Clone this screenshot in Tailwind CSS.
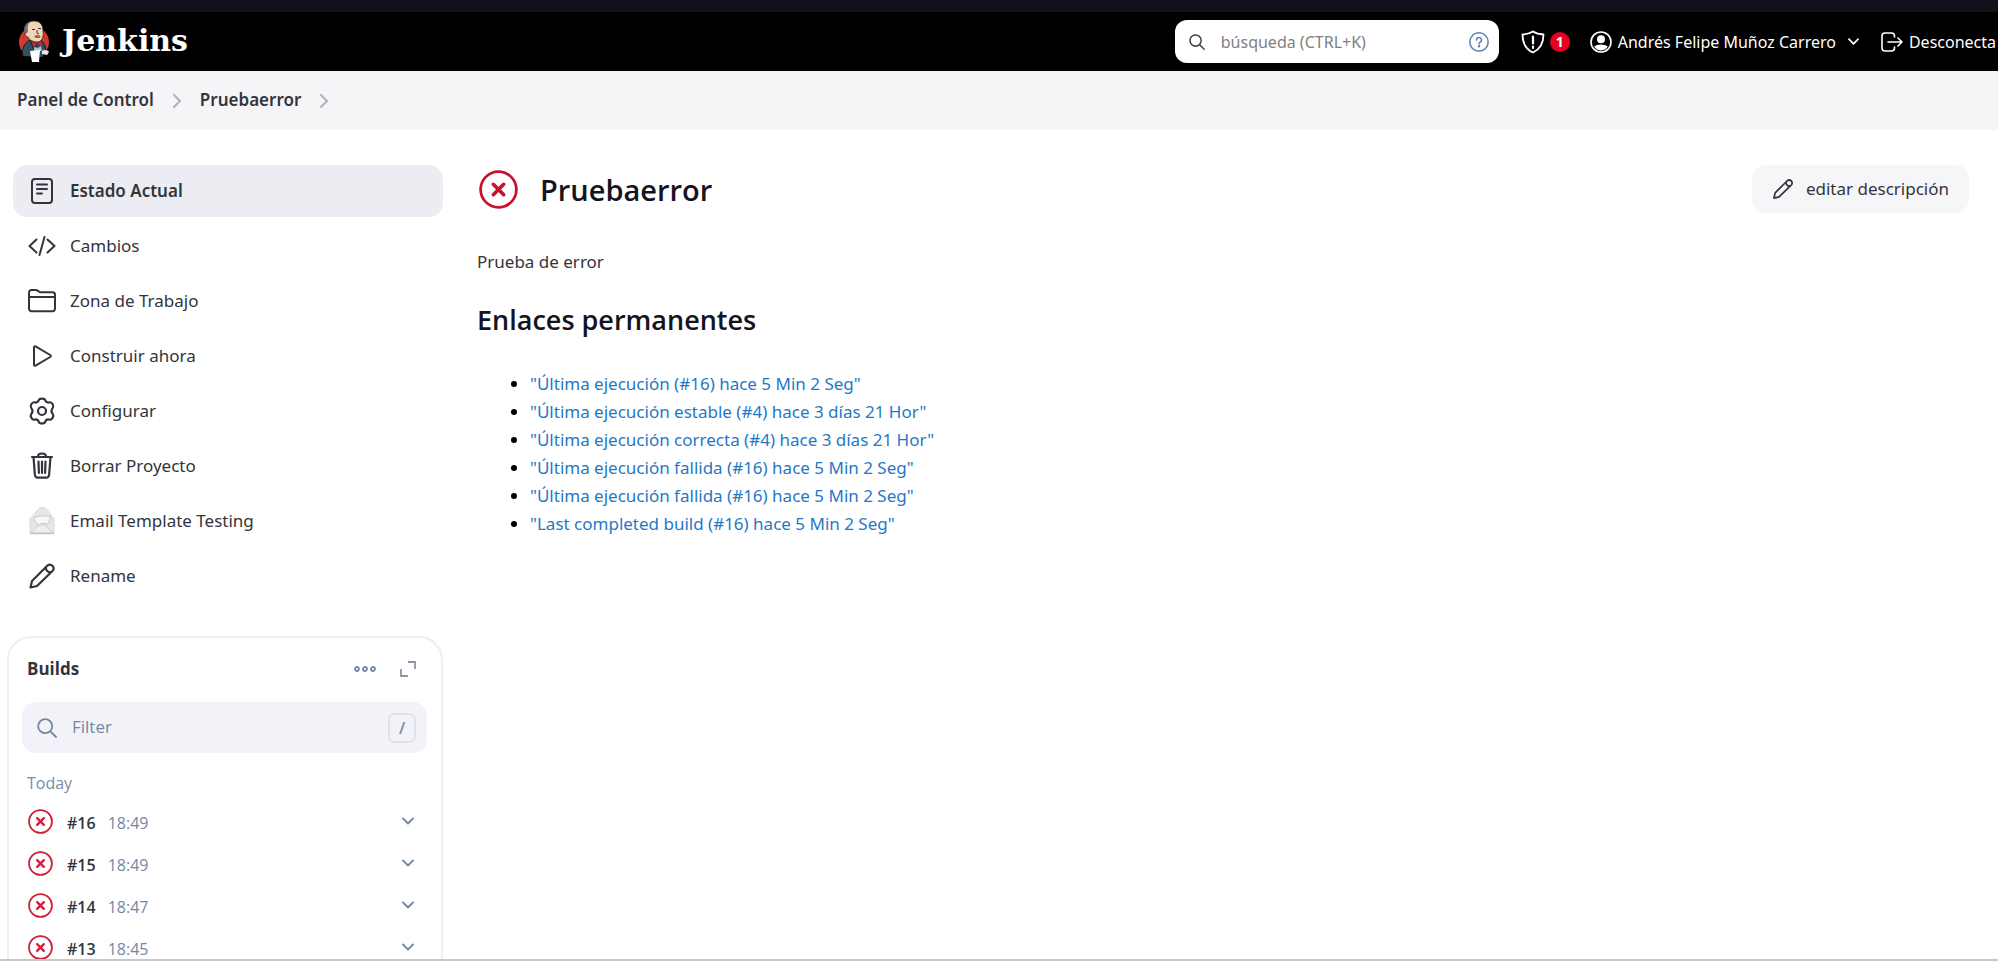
<!DOCTYPE html>
<html lang="es">
<head>
<meta charset="utf-8">
<meta name="viewport" content="width=device-width, initial-scale=1">
<title>Pruebaerror [Jenkins]</title>
<script src="https://cdn.jsdelivr.net/npm/@tailwindcss/browser@4"></script>
</head>
<body class="flex h-screen flex-col overflow-hidden border-b-2 border-[#c9c9cb] bg-white font-['Open_Sans','Noto_Sans',sans-serif] text-lg text-[#33343c]">
<svg class="hidden">
  <symbol id="fail" viewBox="0 0 24 24" fill="none" stroke="currentColor" stroke-linecap="round"><circle cx="12" cy="12" r="11" stroke-width="1.7"/><path d="M8.800 8.800l6.400 6.400M15.200 8.800l-6.400 6.400" stroke-width="2.200"/></symbol>
  <symbol id="down" viewBox="0 0 12 12" fill="none" stroke="currentColor" stroke-width="1.8" stroke-linecap="round" stroke-linejoin="round"><path d="M1 3.5l5 5 5-5"/></symbol>
  <symbol id="right" viewBox="0 0 10 14" fill="none" stroke="currentColor" stroke-width="2" stroke-linecap="round" stroke-linejoin="round"><path d="M2 1l6 6-6 6"/></symbol>
  <symbol id="search" viewBox="0 0 20 20" fill="none" stroke="currentColor" stroke-width="1.8" stroke-linecap="round"><circle cx="8.2" cy="8.2" r="7"/><path d="M13.4 13.4L19 19"/></symbol>
  <symbol id="pencil" viewBox="0 0 28 28" fill="none" stroke="currentColor" stroke-width="2.200" stroke-linejoin="round"><path d="M2.500 25.500l1.500-6.500L19.500 3.500a3.700 3.700 0 0 1 5.200 5.200L9 24z"/><path d="M17.800 5.200c0 3 2 5.200 5.200 5.200"/></symbol>
</svg>

<div class="h-3 shrink-0 bg-[#12101a]"></div>
<header class="flex h-[59px] shrink-0 items-center overflow-hidden bg-black pr-0.5 pl-[18px] font-['Noto_Sans','Open_Sans',sans-serif] whitespace-nowrap text-white">
  <a href="#" class="flex items-center gap-3">
    <svg class="h-[43px] w-8" viewBox="0 0 32 43">
      <circle cx="16" cy="22" r="15" fill="#d33833"/>
      <path d="M5 36C3 28 7 23 12 20l9-1c5 2 7 7 7 12l-4 6z" fill="#335061"/>
      <path d="M5 36C3 28 7 23 12 20l4 10 6-10c4 2 6 7 6 12" fill="none" stroke="#101c25" stroke-width="1"/>
      <path d="M7 13C5 5 10 1 16 1c7 0 9 5 9 10 1 6-1 10-5 11-5 0-9-2-10-5-2 0-3-2-3-4z" fill="#f0d6b7" stroke="#2b2622" stroke-width=".8"/>
      <path d="M7 14C5 8 7 3 12 2c-2 2-3 5-2 9l-1 2z" fill="#6d6b6d"/>
      <path d="M14 9.500h3M20 8.500h3M19 10v3l2 1" stroke="#3c302a" fill="none"/>
      <ellipse cx="19.500" cy="16.500" rx="3" ry="1.600" fill="#8a6a56"/>
      <path d="M14 21l5 3 4-4 1 6-4-2-5 3z" fill="#d8202a"/>
      <path d="M16 27l4 1 3-2 1 5h-8z" fill="#a9c3d4"/>
      <path d="M12 31l10-1-1 12h-7z" fill="#fff"/>
      <path d="M24 31c3-2 6-1 7 1l-2 3-5-1z" fill="#e9e9e9"/>
    </svg>
    <span class="pb-0.5 font-['DejaVu_Serif',serif] text-3xl leading-8 font-bold">Jenkins</span>
  </a>
  <label class="ml-auto flex h-[43px] w-[324px] shrink-0 items-center rounded-xl bg-white px-3.5 text-[#3b3b46]">
    <svg class="size-4 shrink-0"><use href="#search"/></svg>
    <input type="search" aria-label="Búsqueda" placeholder="búsqueda (CTRL+K)" class="ml-4 min-w-0 flex-1 bg-transparent text-base outline-none placeholder:text-[#808080]">
    <svg class="-mr-1 size-5 shrink-0 text-[#5d80ae]" viewBox="0 0 20 20" fill="none" stroke="currentColor" stroke-width="1.500" stroke-linecap="round"><circle cx="10" cy="10" r="9.200"/><path d="M7.500 8a2.500 2.500 0 1 1 3.700 2.200c-.8.500-1.200.8-1.200 1.700"/><circle cx="10" cy="14.300" r=".5" fill="currentColor"/></svg>
  </label>
  <a href="#" class="ml-[22px] flex items-center gap-[5px]">
    <svg class="size-6" viewBox="0 0 24 24" fill="none" stroke="currentColor" stroke-width="1.800" stroke-linejoin="round"><path d="M12 1.500c3 2 6.500 2.800 10.500 3 0 8-3 14.500-10.500 18C4.500 19 1.500 12.500 1.500 4.500c4-.2 7.500-1 10.500-3z"/><path d="M12 6.500v7M12 16.500v1.500" stroke-width="2.200" stroke-linecap="round"/></svg>
    <span class="flex size-5 items-center justify-center rounded-full bg-[#e6001f] text-sm font-bold">1</span>
  </a>
  <a href="#" class="ml-5 flex items-center gap-1.5 text-base">
    <svg class="size-[22px]" viewBox="0 0 22 22"><circle cx="11" cy="11" r="10" fill="none" stroke="currentColor" stroke-width="1.600"/><circle cx="11" cy="8.200" r="4" fill="currentColor"/><path d="M4.200 15.500c3-2.700 10.600-2.700 13.600 0-3 5.300-10.600 5.300-13.600 0z" fill="currentColor"/></svg>
    Andrés Felipe Muñoz Carrero
  </a>
  <button type="button" aria-label="Menú de usuario" class="ml-3"><svg class="size-[11px]"><use href="#down"/></svg></button>
  <a href="#" class="ml-[22px] flex items-center gap-1.5 text-base">
    <svg class="h-5 w-[22px]" viewBox="0 0 22 20" fill="none" stroke="currentColor" stroke-width="1.600" stroke-linecap="round" stroke-linejoin="round"><path d="M13.500 5V4a3 3 0 0 0-3-3H4a3 3 0 0 0-3 3v12a3 3 0 0 0 3 3h6.500a3 3 0 0 0 3-3v-1M7 10h14M17 6l4 4-4 4"/></svg>
    Desconecta
  </a>
</header>

<nav aria-label="Ruta" class="flex h-[59px] shrink-0 items-center bg-[#f5f5f8] px-[17px] font-['Noto_Sans','Open_Sans',sans-serif] text-[17px] font-semibold">
  <a href="#">Panel de Control</a>
  <svg class="mx-[18px] h-3.5 w-2.5 text-[#a9b4c4]"><use href="#right"/></svg>
  <a href="#">Pruebaerror</a>
  <svg class="mx-[18px] h-3.5 w-2.5 text-[#a9b4c4]"><use href="#right"/></svg>
</nav>

<div class="flex min-h-0 flex-1 overflow-hidden pt-[35px]">
  <aside class="w-[443px] shrink-0">
    <nav aria-label="Proyecto" class="flex flex-col gap-[3px] pl-[13px] font-['Noto_Sans','Open_Sans',sans-serif] text-[17px]">
      <a href="#" aria-current="page" class="flex h-[52px] items-center gap-3.5 rounded-[14px] bg-[#ecedf3] px-[15px] font-semibold">
        <svg class="size-7" viewBox="0 0 28 28" fill="none" stroke="currentColor" stroke-width="2" stroke-linecap="round"><rect x="4" y="2" width="20" height="24" rx="3"/><path d="M9 7.500h10M9 12h10M9 16.500h5"/></svg>Estado Actual</a>
      <a href="#" class="flex h-[52px] items-center gap-3.5 px-[15px]">
        <svg class="size-7" viewBox="0 0 28 28" fill="none" stroke="currentColor" stroke-width="2" stroke-linecap="round" stroke-linejoin="round"><path d="M8.500 7.500L1.500 14l7 6.500M19.500 7.500l7 6.500-7 6.500M16.500 5l-5 18"/></svg>Cambios</a>
      <a href="#" class="flex h-[52px] items-center gap-3.5 px-[15px]">
        <svg class="size-7" viewBox="0 0 28 28" fill="none" stroke="currentColor" stroke-width="2" stroke-linejoin="round"><path d="M1 10V5.500a2.500 2.500 0 0 1 2.500-2.500h4c1.500 0 2 .5 3 1.300.8.700 1.500 1 2.500 1h11.500A2.500 2.500 0 0 1 27 7.800v14a2.500 2.500 0 0 1-2.500 2.500h-21A2.500 2.500 0 0 1 1 21.800zM1 10h26"/></svg>Zona de Trabajo</a>
      <a href="#" class="flex h-[52px] items-center gap-3.5 px-[15px]">
        <svg class="size-7" viewBox="0 0 28 28" fill="none" stroke="currentColor" stroke-width="2" stroke-linejoin="round"><path d="M6 5.300v17.400c0 1 .8 1.300 1.600.9l14.600-8.600c.8-.5.8-1.500 0-2L7.600 4.400C6.800 4 6 4.300 6 5.300z"/></svg>Construir ahora</a>
      <a href="#" class="flex h-[52px] items-center gap-3.5 px-[15px]">
        <svg class="size-7" viewBox="0 0 28 28" fill="none" stroke="currentColor" stroke-width="2.200" stroke-linejoin="round"><path d="M10.800 3.200C11.500 1 16.500 1 17.200 3.200C18 5.300 19.500 5.900 21.600 5.300C24 4.900 26.300 9 24.800 10.900C23.300 12.700 23.300 15.300 24.800 17.100C26.300 19 24 23.100 21.600 22.700C19.500 22.100 18 22.700 17.200 24.800C16.500 27 11.500 27 10.800 24.800C10 22.700 8.500 22.100 6.400 22.700C4 23.100 1.700 19 3.200 17.100C4.700 15.300 4.700 12.700 3.200 10.900C1.700 9 4 4.900 6.400 5.300C8.500 5.900 10 5.300 10.800 3.200z"/><circle cx="14" cy="14" r="4"/></svg>Configurar</a>
      <a href="#" class="flex h-[52px] items-center gap-3.5 px-[15px]">
        <svg class="size-7" viewBox="0 0 28 28" fill="none" stroke="currentColor" stroke-width="2.200" stroke-linecap="round" stroke-linejoin="round"><path d="M4 5h20M10 4.500c0-4 8-4 8 0M5.500 5l1.400 18a3 3 0 0 0 3 2.700h8.200a3 3 0 0 0 3-2.700l1.400-18M10.500 9.500l.4 11.500M14 9.500V21M17.500 9.500L17.100 21"/></svg>Borrar Proyecto</a>
      <a href="#" class="flex h-[52px] items-center gap-3.5 px-[15px]">
        <svg class="size-7" viewBox="0 0 28 28" stroke-linejoin="round"><path d="M2 12l7-8q2-3.500 4-3.500h3q2 0 4 3.500l6 8v14H2z" fill="#e6e6e6" stroke="#dadada"/><path d="M6 11q8-4 17-1l-3 7-5-1-4 2-3-2z" fill="#f8f8f8" stroke="#cacaca"/><path d="M2.500 26L11 18h6l8.500 8z" fill="#eee" stroke="#d2d2d2"/><path d="M2 26.500h24" stroke="#c2c2c2" stroke-width="1.500"/></svg>Email Template Testing</a>
      <a href="#" class="flex h-[52px] items-center gap-3.5 px-[15px]">
        <svg class="size-7"><use href="#pencil"/></svg>Rename</a>
    </nav>

    <section class="mt-[34px] ml-[7px] h-[400px] rounded-t-3xl border-2 border-[#ededf2] px-[13px] pt-3">
      <div class="flex h-[38px] items-center px-[5px]">
        <h2 class="mr-auto text-[17px] font-bold">Builds</h2>
        <button type="button" aria-label="Más opciones" class="mr-6 text-[#7389a8]"><svg class="h-2 w-[22px]" viewBox="0 0 22 8" fill="none" stroke="currentColor" stroke-width="1.800"><circle cx="3" cy="4" r="2"/><circle cx="11" cy="4" r="2"/><circle cx="19" cy="4" r="2"/></svg></button>
        <button type="button" aria-label="Expandir" class="mr-[7px] text-[#8a97aa]"><svg class="size-4" viewBox="0 0 16 16" fill="none" stroke="currentColor" stroke-width="1.800"><path d="M8 1h7v7M1 8v7h7"/></svg></button>
      </div>
      <label class="mt-3.5 mr-px flex h-[51px] items-center rounded-[14px] bg-[#f2f2f8] px-[15px] text-[#7487a5]">
        <svg class="size-5"><use href="#search"/></svg>
        <input type="text" aria-label="Filtrar builds" placeholder="Filter" class="ml-[15px] min-w-0 flex-1 bg-transparent text-[17px] outline-none placeholder:text-[#7487a5]">
        <kbd class="-mr-1 flex h-[30px] w-7 items-center justify-center rounded-md border-2 border-[#e2e3ea] font-['Open_Sans',sans-serif] text-base font-semibold">/</kbd>
      </label>
      <h3 class="mt-[18px] px-[5px] text-base leading-6 text-[#7b8ba4]">Today</h3>
      <ul class="mt-[5px] text-base">
        <li class="flex h-[42px] items-center px-1.5"><svg class="size-[25px] text-[#cc1f3b]"><use href="#fail"/></svg><a href="#" class="ml-3.5 pt-1 leading-5 font-semibold">#16</a><span class="ml-3 pt-1 leading-5 text-[#7487a5]">18:49</span><button type="button" aria-label="Opciones de #16" class="mr-2 ml-auto text-[#7487a5]"><svg class="size-3"><use href="#down"/></svg></button></li>
        <li class="flex h-[42px] items-center px-1.5"><svg class="size-[25px] text-[#cc1f3b]"><use href="#fail"/></svg><a href="#" class="ml-3.5 pt-1 leading-5 font-semibold">#15</a><span class="ml-3 pt-1 leading-5 text-[#7487a5]">18:49</span><button type="button" aria-label="Opciones de #15" class="mr-2 ml-auto text-[#7487a5]"><svg class="size-3"><use href="#down"/></svg></button></li>
        <li class="flex h-[42px] items-center px-1.5"><svg class="size-[25px] text-[#cc1f3b]"><use href="#fail"/></svg><a href="#" class="ml-3.5 pt-1 leading-5 font-semibold">#14</a><span class="ml-3 pt-1 leading-5 text-[#7487a5]">18:47</span><button type="button" aria-label="Opciones de #14" class="mr-2 ml-auto text-[#7487a5]"><svg class="size-3"><use href="#down"/></svg></button></li>
        <li class="flex h-[42px] items-center px-1.5"><svg class="size-[25px] text-[#cc1f3b]"><use href="#fail"/></svg><a href="#" class="ml-3.5 pt-1 leading-5 font-semibold">#13</a><span class="ml-3 pt-1 leading-5 text-[#7487a5]">18:45</span><button type="button" aria-label="Opciones de #13" class="mr-2 ml-auto text-[#7487a5]"><svg class="size-3"><use href="#down"/></svg></button></li>
      </ul>
    </section>
  </aside>

  <main class="min-w-0 flex-1 pr-[29px] pl-[34px] font-['Noto_Sans','Open_Sans',sans-serif]">
    <div class="flex h-12 items-center">
      <svg class="ml-0.5 size-[39px] text-[#cc0f2b]"><use href="#fail"/></svg>
      <h1 class="ml-[22px] pt-0.5 font-['Open_Sans',sans-serif] text-[29px] leading-10 font-semibold text-[#14141f]">Pruebaerror</h1>
      <a href="#" class="ml-auto flex h-12 items-center gap-3 rounded-[14px] bg-[#f6f6f9] px-5 text-[17px]"><svg class="size-[22px]"><use href="#pencil"/></svg>editar descripción</a>
    </div>
    <p class="mt-9 text-[17px] leading-[26px]">Prueba de error</p>
    <h2 class="mt-[25px] font-['Open_Sans',sans-serif] text-[27px] leading-10 font-semibold text-[#14141f]">Enlaces permanentes</h2>
    <ul class="mt-[30px] list-disc pl-[53px] text-[17px] leading-7 text-[#1f78c8] marker:text-black">
      <li><a href="#">"Última ejecución (#16) hace 5 Min 2 Seg"</a></li>
      <li><a href="#">"Última ejecución estable (#4) hace 3 días 21 Hor"</a></li>
      <li><a href="#">"Última ejecución correcta (#4) hace 3 días 21 Hor"</a></li>
      <li><a href="#">"Última ejecución fallida (#16) hace 5 Min 2 Seg"</a></li>
      <li><a href="#">"Última ejecución fallida (#16) hace 5 Min 2 Seg"</a></li>
      <li><a href="#">"Last completed build (#16) hace 5 Min 2 Seg"</a></li>
    </ul>
  </main>
</div>
</body>
</html>
